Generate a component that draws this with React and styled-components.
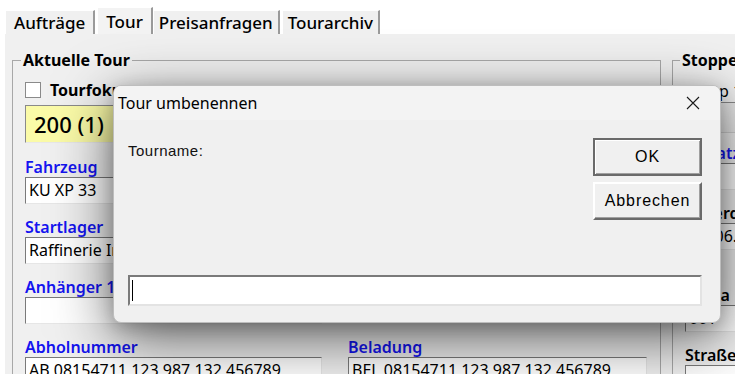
import React from 'react';
import styled, { createGlobalStyle } from 'styled-components';

const GlobalStyle = createGlobalStyle`
  html, body { margin: 0; padding: 0; background: #ffffff; }
  body { font-family: "Noto Sans", "Open Sans", sans-serif; color: #000; }
`;

const Page = styled.div`
  position: relative;
  width: 735px;
  height: 374px;
  overflow: hidden;
  background: #ffffff;
`;

const TabStrip = styled.div`
  display: flex;
  align-items: flex-end;
  height: 34px;
  padding-left: 5px;
  box-sizing: border-box;
`;

const Tab = styled.div`
  height: ${p => (p.$active ? '27px' : '24px')};
  padding: 0 ${p => p.$pad || 8}px;
  margin-right: ${p => (p.$active ? '0' : '2px')};
  display: flex;
  align-items: center;
  font-size: 17px;
  font-weight: 500;
  line-height: 1;
  background: ${p => (p.$active ? '#f3f3f3' : '#f0f0f0')};
  border-left: 1px solid #ffffff;
  border-top: 1px solid #ffffff;
  border-right: 2px solid #9a9a9a;
  box-sizing: border-box;
`;

const TabPanel = styled.div`
  margin-left: 5px;
  height: 340px;
  background: #f0f0f0;
  display: flex;
  gap: 11px;
  padding: 17px 0 0 7px;
  box-sizing: border-box;
`;

const GroupBox = styled.fieldset`
  margin: 0;
  padding: 10px 0 0 12px;
  width: ${p => (p.$width ? `${p.$width}px` : 'auto')};
  flex: ${p => (p.$width ? 'none' : '1')};
  border: 1px solid #a8a8a8;
  border-right: ${p => (p.$open ? 'none' : '1px solid #a8a8a8')};
  border-bottom: none;
  box-sizing: border-box;
  min-width: 0;
`;

const Legend = styled.legend`
  padding: 0 2px;
  margin-left: ${p => p.$shift || -4}px;
  font-size: 16px;
  font-weight: 700;
  line-height: 18px;
  white-space: nowrap;
`;

const CheckRow = styled.div`
  display: flex;
  align-items: center;
  gap: 9px;
  height: 20px;
  margin-top: 1px;
  font-size: 16px;
  font-weight: 700;
`;

const CheckBox = styled.span`
  width: 14px;
  height: 14px;
  border: 1px solid #8a8a8a;
  background: #ffffff;
`;

const CountBox = styled.div`
  margin-top: 5px;
  width: 150px;
  height: 38px;
  background: #fbfba8;
  border-top: 1px solid #8a8a8a;
  border-left: 1px solid #8a8a8a;
  border-right: 1px solid #e8e8e8;
  border-bottom: 1px solid #e8e8e8;
  box-sizing: border-box;
  padding-left: 8px;
  display: flex;
  align-items: center;
  font-size: 22px;
  font-weight: 500;
`;

const FieldStack = styled.div`
  display: flex;
  flex-direction: column;
  margin-top: ${p => p.$top || 0}px;
`;

const FieldRow = styled.div`
  display: flex;
  gap: 26px;
`;

const Field = styled.div`
  display: flex;
  flex-direction: column;
  width: ${p => p.$width || 297}px;
  margin-bottom: ${p => p.$after || 13}px;
`;

const Label = styled.div`
  height: 20px;
  font-size: 16px;
  font-weight: 600;
  line-height: 20px;
  color: ${p => (p.$dark ? '#000000' : '#1414f0')};
  white-space: nowrap;
`;

const Input = styled.div`
  height: 27px;
  background: #ffffff;
  border-top: 1px solid #7a7a7a;
  border-left: 1px solid #7a7a7a;
  border-right: 1px solid #e6e6e6;
  border-bottom: 1px solid #e6e6e6;
  box-sizing: border-box;
  padding-left: 3px;
  font-size: 16px;
  line-height: 25px;
  white-space: nowrap;
  overflow: hidden;
`;

const SubTabs = styled.div`
  margin-top: 1px;
  height: 22px;
  border-bottom: 1px solid #8a8a8a;
  font-size: 16px;
  line-height: 22px;
  white-space: nowrap;
`;

const GrayStrip = styled.div`
  height: 29px;
  background: #e8e8e8;
  border-bottom: 1px solid #d0d0d0;
  margin-bottom: 10px;
`;

/* dialog */
const Dialog = styled.div`
  position: absolute;
  left: 113px;
  top: 85px;
  width: 608px;
  height: 238px;
  background: #f0f0f0;
  border: 1px solid #bdbdbd;
  border-radius: 8px;
  box-sizing: border-box;
  overflow: hidden;
  display: flex;
  flex-direction: column;
  box-shadow: 0 16px 60px rgba(0, 0, 0, 0.6), 0 4px 18px rgba(0, 0, 0, 0.2);
`;

const TitleBar = styled.div`
  height: 34px;
  flex: none;
  display: flex;
  align-items: center;
  justify-content: space-between;
  padding-left: 4px;
  background: #f3f3f3;
  font-size: 16px;
`;

const CloseButton = styled.div`
  width: 46px;
  height: 34px;
  display: flex;
  align-items: center;
  justify-content: center;
  margin-right: 4px;
`;

const Body = styled.div`
  flex: 1;
  display: flex;
  flex-direction: column;
  justify-content: space-between;
  padding: 18px 18px 16px 14px;
  font-family: "Liberation Sans", Arial, sans-serif;
`;

const TopRow = styled.div`
  display: flex;
  justify-content: space-between;
`;

const Prompt = styled.div`
  font-size: 15px;
  letter-spacing: 0.5px;
  margin-top: 4px;
  color: #111;
`;

const ButtonColumn = styled.div`
  display: flex;
  flex-direction: column;
  gap: 6px;
`;

const Button = styled.div`
  width: 109px;
  height: 38px;
  box-sizing: border-box;
  display: flex;
  align-items: center;
  justify-content: center;
  font-size: 16px;
  letter-spacing: 0.9px;
  background: #f0f0f0;
  border-top: 2px solid ${p => (p.$default ? '#6a6a6a' : '#ffffff')};
  border-left: 2px solid ${p => (p.$default ? '#6a6a6a' : '#ffffff')};
  border-right: 2px solid #6a6a6a;
  border-bottom: 2px solid #6a6a6a;
  box-shadow: ${p => (p.$default ? 'inset 1px 1px 0 #ffffff, inset -1px -1px 0 #a0a0a0' : 'inset -1px -1px 0 #a0a0a0')};
`;

const TextBox = styled.div`
  height: 31px;
  background: #ffffff;
  border-top: 2px solid #7a7a7a;
  border-left: 2px solid #7a7a7a;
  border-right: 2px solid #e3e3e3;
  border-bottom: 2px solid #e3e3e3;
  box-sizing: border-box;
  display: flex;
  align-items: center;
  padding-left: 2px;
`;

const Caret = styled.span`
  width: 1px;
  height: 21px;
  background: #000;
`;

const tabs = [
  { name: 'Aufträge', pad: 8 },
  { name: 'Tour', pad: 8, active: true },
  { name: 'Preisanfragen', pad: 5 },
  { name: 'Tourarchiv', pad: 5 },
];

const App = () => {
  return (
    <>
      <GlobalStyle />
      <Page>
        <TabStrip>
          {tabs.map(t => (
            <Tab key={t.name} $active={t.active} $pad={t.pad}>{t.name}</Tab>
          ))}
        </TabStrip>
        <TabPanel>
          <GroupBox $width={649}>
            <Legend>Aktuelle Tour</Legend>
            <CheckRow><CheckBox />Tourfokus</CheckRow>
            <CountBox>200 (1)</CountBox>
            <FieldStack $top={14}>
              <Field>
                <Label>Fahrzeug</Label>
                <Input>KU XP 33</Input>
              </Field>
              <Field>
                <Label>Startlager</Label>
                <Input>Raffinerie Ingolstadt</Input>
              </Field>
              <Field>
                <Label>Anhänger 1</Label>
                <Input />
              </Field>
              <FieldRow>
                <Field>
                  <Label>Abholnummer</Label>
                  <Input>AB 08154711 123 987 132 456789</Input>
                </Field>
                <Field $width={299}>
                  <Label>Beladung</Label>
                  <Input>BEL 08154711 123 987 132 456789</Input>
                </Field>
              </FieldRow>
            </FieldStack>
          </GroupBox>
          <GroupBox $open>
            <Legend $shift={-5}>Stoppeigenschaften</Legend>
            <SubTabs>Stopp 1</SubTabs>
            <GrayStrip />
            <Field>
              <Label>Einsatz</Label>
              <Input />
            </Field>
            <Field $after={35}>
              <Label $dark>Lieferdatum</Label>
              <Input>Do 06.06.2024</Input>
            </Field>
            <Field>
              <Label $dark>Firma</Label>
              <Input>001</Input>
            </Field>
            <Field>
              <Label $dark>Straße</Label>
              <Input />
            </Field>
          </GroupBox>
        </TabPanel>

        <Dialog>
          <TitleBar>
            Tour umbenennen
            <CloseButton>
              <svg width="14" height="14" viewBox="0 0 14 14">
                <path d="M1 1 L13 13 M13 1 L1 13" stroke="#1a1a1a" strokeWidth="1.1" fill="none" />
              </svg>
            </CloseButton>
          </TitleBar>
          <Body>
            <TopRow>
              <Prompt>Tourname:</Prompt>
              <ButtonColumn>
                <Button $default>OK</Button>
                <Button>Abbrechen</Button>
              </ButtonColumn>
            </TopRow>
            <TextBox><Caret /></TextBox>
          </Body>
        </Dialog>
      </Page>
    </>
  );
};

export default App;
